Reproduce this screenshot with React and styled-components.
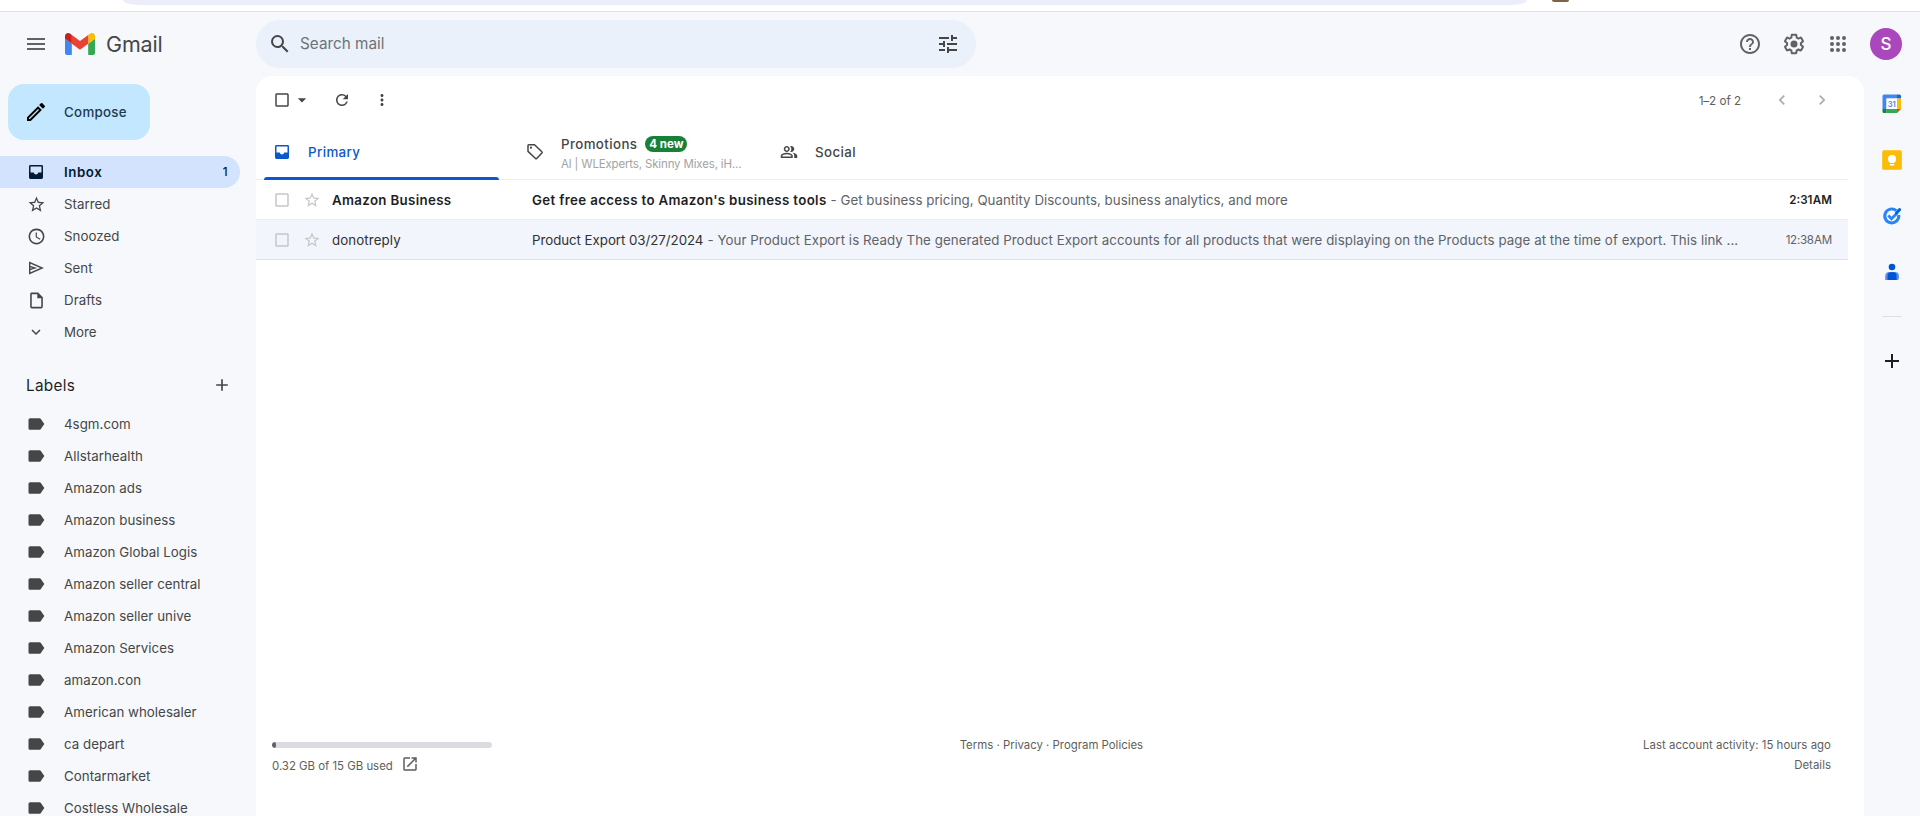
import React from 'react'
import styled, { createGlobalStyle } from 'styled-components'
import {
  MdAccessTime,
  MdAdd,
  MdArrowDropDown,
  MdCheckBoxOutlineBlank,
  MdChevronLeft,
  MdChevronRight,
  MdExpandMore,
  MdHelpOutline,
  MdLabel,
  MdMenu,
  MdMoreVert,
  MdOpenInNew,
  MdOutlineInsertDriveFile,
  MdOutlineModeEdit,
  MdOutlinePeopleAlt,
  MdRefresh,
  MdSearch,
  MdStarOutline,
  MdTune,
} from 'react-icons/md'

const GlobalStyle = createGlobalStyle`
  * {
    box-sizing: border-box;
  }
  body {
    margin: 0;
    overflow: hidden;
    background: #f6f8fc;
    font-family: Inter, Roboto, sans-serif;
    font-size: 13.3px;
    color: #444746;
  }
  svg {
    display: block;
    flex: none;
  }
`
const Page = styled.div`
  display: flex;
  flex-direction: column;
  height: 816px;
  overflow: hidden;
`
const BrowserEdge = styled.div`
  display: flex;
  align-items: flex-start;
  flex: none;
  height: 12px;
  padding-left: 123px;
  background: #fff;
  border-bottom: 1px solid #dfe3e1;
`
const AddressBar = styled.div`
  width: 1404px;
  height: 5px;
  border-radius: 0 0 16px 16px / 0 0 5px 5px;
  background: #ebeef8;
`
const Extension = styled.div`
  width: 17px;
  height: 2px;
  margin-left: 25px;
  border-radius: 0 0 2px 2px;
  background: #82623f;
`
const Header = styled.header`
  display: flex;
  align-items: center;
  flex: none;
  height: 64px;
  padding: 0 18px 0 24px;
`
const Brand = styled.div`
  display: flex;
  align-items: center;
  width: 232px;
  color: #5f6368;
`
const LogoSlot = styled.div`
  margin-left: 17px;
`
const BrandName = styled.span`
  margin-left: 11px;
  font-size: 21.5px;
  letter-spacing: -0.15px;
  color: #444746;
`
const SearchBox = styled.div`
  display: flex;
  align-items: center;
  width: 720px;
  height: 48px;
  padding: 0 16px 1px 12px;
  border-radius: 24px;
  background: #eaf1fb;
  color: #444746;
`
const SearchHint = styled.span`
  flex: 1;
  margin-left: 8px;
  font-size: 15.3px;
  color: #6e7377;
`
const HeaderActions = styled.div`
  display: flex;
  align-items: center;
  gap: 20px;
  margin-left: auto;
  color: #5f6368;
`
const Avatar = styled.div`
  width: 32px;
  height: 32px;
  border-radius: 50%;
  background: #ab47bc;
  color: #fff;
  font-size: 17px;
  font-weight: 500;
  line-height: 32px;
  text-align: center;
`
const Body = styled.div`
  display: flex;
  flex: 1;
  min-height: 0;
`
const Sidebar = styled.aside`
  flex: none;
  width: 256px;
  padding-top: 8px;
  overflow: hidden;
`
const Compose = styled.div`
  display: flex;
  align-items: center;
  gap: 16px;
  width: 142px;
  height: 56px;
  margin: 0 0 16px 8px;
  padding-left: 16px;
  border-radius: 16px;
  background: #c2e7ff;
  color: #1c3a52;
  font-weight: 450;
  letter-spacing: 0.3px;
`
const NavItem = styled.div`
  display: flex;
  align-items: center;
  width: 240px;
  height: 32px;
  padding: 0 12px 0 26px;
  border-radius: 0 16px 16px 0;
  background: ${p => (p.$active ? '#d3e3fd' : 'none')};
  color: ${p => (p.$active ? '#001d35' : '#444746')};
  font-weight: ${p => (p.$active ? 600 : 400)};
  letter-spacing: ${p => (p.$active ? 0.55 : 0.03)}px;
`
const NavIcon = styled.span`
  display: flex;
  justify-content: center;
  width: 20px;
  margin-right: 18px;
`
const NavCount = styled.span`
  margin-left: auto;
  font-size: 11.5px;
  font-weight: 500;
`
const LabelsHead = styled.div`
  display: flex;
  align-items: center;
  justify-content: space-between;
  width: 240px;
  height: 32px;
  margin: 21px 0 7px;
  padding: 0 8px 0 26px;
  font-size: 15.3px;
  letter-spacing: 0.3px;
  color: #1f1f1f;
  svg {
    color: #444746;
  }
`
const Panel = styled.main`
  display: flex;
  flex-direction: column;
  flex: none;
  width: 1608px;
  border-radius: 16px 16px 0 0;
  background: #fff;
`
const Toolbar = styled.div`
  display: flex;
  align-items: center;
  height: 48px;
  padding: 0 12px 0 16px;
`
const ToolIcon = styled.span`
  display: flex;
  align-items: center;
  justify-content: center;
  width: ${p => p.$width || 20}px;
  height: 20px;
  color: ${p => p.$color || '#444746'};
`
const PageCount = styled.span`
  margin: 1px 31px 0 auto;
  font-size: 11.7px;
  letter-spacing: -0.05px;
  color: #5e5e5e;
`
const Tabs = styled.div`
  display: flex;
  flex: none;
  width: 1592px;
  height: 56px;
  border-bottom: 1px solid #eceff1;
`
const Tab = styled.div`
  position: relative;
  display: flex;
  align-items: center;
  width: 253px;
  padding-left: 16px;
  color: ${p => (p.$active ? '#0b57d0' : '#444746')};
  font-weight: 450;
`
const TabLine = styled.div`
  position: absolute;
  left: 8px;
  bottom: -1px;
  width: 235px;
  height: 3px;
  border-radius: 3px 3px 0 0;
  background: #0b57d0;
`
const TabText = styled.div`
  display: flex;
  flex-direction: column;
  gap: 5px;
  margin-left: 16px;
  letter-spacing: 0.4px;
`
const TabTitle = styled.div`
  display: flex;
  align-items: center;
  gap: 8px;
  margin-top: 4px;
  line-height: 16px;
`
const Badge = styled.span`
  width: 42px;
  height: 16px;
  border-radius: 8px;
  background: #188038;
  color: #fff;
  font-size: 11.5px;
  font-weight: 700;
  letter-spacing: 0;
  line-height: 16px;
  text-align: center;
`
const TabHint = styled.div`
  font-size: 11.5px;
  font-weight: 400;
  line-height: 14px;
  letter-spacing: -0.16px;
  white-space: nowrap;
  color: #a3a3a3;
`
const MailRow = styled.div`
  display: flex;
  align-items: center;
  flex: none;
  width: 1592px;
  height: 40px;
  padding: 0 16px;
  border-bottom: 1px solid ${p => (p.$read ? '#dde1ea' : '#e9ecf0')};
  background: ${p => (p.$read ? '#f2f5fc' : '#fff')};
  color: ${p => (p.$read ? '#303134' : '#1f1f1f')};
  font-weight: ${p => (p.$read ? 400 : 600)};
  white-space: nowrap;
`
const Sender = styled.span`
  width: 200px;
  letter-spacing: ${p => (p.$read ? 0.1 : 0.33)}px;
`
const Subject = styled.span`
  letter-spacing: ${p => (p.$read ? -0.04 : 0.34)}px;
`
const Snippet = styled.span`
  margin-left: 4px;
  color: #5f6368;
  font-weight: 400;
  letter-spacing: ${p => (p.$read ? 0.063 : 0.025)}px;
`
const Time = styled.span`
  margin-left: auto;
  font-size: 11.6px;
  letter-spacing: ${p => (p.$read ? -0.3 : 0)}px;
  word-spacing: -2.5px;
  color: ${p => (p.$read ? '#5f6368' : '#1f1f1f')};
`
const Footer = styled.footer`
  display: grid;
  grid-template-columns: 1fr 1fr 1fr;
  margin-top: auto;
  padding: 0 33px 39px 16px;
  font-size: 11.4px;
  line-height: 20px;
  color: #5e5e5e;
`
const StorageBar = styled.div`
  width: 220px;
  height: 6px;
  margin: 7px 0 7px;
  border-radius: 3px;
  background: #dadce0;
  overflow: hidden;
`
const StorageUsed = styled.div`
  width: 4px;
  height: 6px;
  border-radius: 2px;
  background: #5f6368;
`
const StorageText = styled.div`
  display: flex;
  gap: 8px;
  line-height: 22px;
`
const Terms = styled.div`
  padding-left: 168px;
`
const Activity = styled.div`
  letter-spacing: 0.04px;
  text-align: right;
`
const SidePanel = styled.aside`
  display: flex;
  flex-direction: column;
  align-items: center;
  width: 56px;
  padding-top: 18px;
  color: #1f1f1f;
`
const AppSlot = styled.div`
  display: flex;
  align-items: center;
  justify-content: center;
  height: 20px;
  margin-bottom: 36px;
`
const Rule = styled.div`
  width: 20px;
  height: 1px;
  margin: -2px 0 32px;
  background: #dcdfe3;
`

const GmailLogo = () => (
  <svg width="30" height="22" viewBox="52 42 88 66" preserveAspectRatio="none">
    <path fill="#4285f4" d="M58 108h14V74L52 59v43c0 3.32 2.69 6 6 6" />
    <path fill="#34a853" d="M120 108h14c3.32 0 6-2.69 6-6V59l-20 15" />
    <path fill="#fbbc04" d="M120 48v26l20-15v-8c0-7.42-8.47-11.65-14.4-7.2" />
    <path fill="#ea4335" d="M72 74V48l24 18 24-18v26L96 92" />
    <path fill="#c5221f" d="M52 51v8l20 15V48l-5.6-4.2c-5.94-4.45-14.4-.22-14.4 7.2" />
  </svg>
)
const GearIcon = () => (
  <svg width="24" height="24" viewBox="0 0 24 24" fill="currentColor">
    <path d="M13.85 22.25h-3.7c-.74 0-1.36-.54-1.45-1.27l-.27-1.89c-.27-.14-.53-.29-.79-.46l-1.8.72c-.7.26-1.47-.03-1.81-.65L2.2 15.53c-.35-.66-.2-1.44.36-1.88l1.53-1.19c-.01-.15-.02-.3-.02-.46 0-.15.01-.31.02-.46l-1.52-1.19c-.59-.45-.74-1.26-.37-1.88l1.85-3.19c.34-.62 1.11-.9 1.79-.63l1.81.73c.26-.17.52-.32.78-.46l.27-1.91c.09-.7.71-1.25 1.44-1.25h3.7c.74 0 1.36.54 1.45 1.27l.27 1.89c.27.14.53.29.79.46l1.8-.72c.71-.26 1.48.03 1.82.65l1.84 3.18c.36.66.2 1.44-.36 1.88l-1.52 1.19c.01.15.02.3.02.46s-.01.31-.02.46l1.52 1.19c.56.45.72 1.23.37 1.86l-1.86 3.22c-.34.62-1.11.9-1.8.63l-1.8-.72c-.26.17-.52.32-.78.46l-.27 1.91c-.1.68-.72 1.22-1.46 1.22zm-3.23-2h2.76l.37-2.55.53-.22c.44-.18.88-.44 1.34-.78l.45-.34 2.38.96 1.38-2.4-2.03-1.58.07-.56c.03-.26.06-.51.06-.78s-.03-.53-.06-.78l-.07-.56 2.03-1.58-1.39-2.4-2.39.96-.45-.35c-.42-.32-.87-.58-1.33-.77l-.52-.22-.37-2.55h-2.76l-.37 2.55-.53.21c-.44.19-.88.44-1.34.79l-.45.33-2.38-.95-1.39 2.39 2.03 1.58-.07.56a7 7 0 0 0-.06.79c0 .26.02.53.06.78l.07.56-2.03 1.58 1.38 2.4 2.39-.96.45.35c.43.33.86.58 1.33.77l.53.22.38 2.55z" />
    <circle cx="12" cy="12" r="3.5" />
  </svg>
)
const AppsIcon = () => (
  <svg width="24" height="24" viewBox="0 0 24 24" fill="currentColor">
    {[6, 12, 18].map(y => [6, 12, 18].map(x => <circle key={x + '-' + y} cx={x} cy={y} r="2" />))}
  </svg>
)
// solid tray with the upper part cut out
const InboxIcon = () => (
  <svg width="20" height="20" viewBox="0 0 20 20" fill="currentColor">
    <path
      fillRule="evenodd"
      d="M4.4 3h11.2Q17 3 17 4.4v11.2q0 1.4-1.4 1.4H4.4Q3 17 3 15.6V4.4Q3 3 4.4 3zM4.5 4.5v6h3.2q.6 2 2.3 2t2.3-2h3.2v-6z"
    />
  </svg>
)
const SendIcon = () => (
  <svg width="20" height="20" viewBox="0 0 20 20" fill="none" stroke="currentColor" strokeWidth="1.4">
    <path d="M3.7 4.6v10.8L16.2 10zM3.7 8.3l5.2 1.7-5.2 1.7" />
  </svg>
)
const TagIcon = () => (
  <svg width="20" height="20" viewBox="0 0 20 20" fill="none" stroke="currentColor" strokeWidth="1.5">
    <path d="M3 3.5q0-.8.8-.8h5.7l7.4 7.1q.6.6 0 1.2l-5.2 5.5q-.6.6-1.2 0L3 9.4z" />
    <circle cx="6" cy="5.7" r="1.1" fill="currentColor" stroke="none" />
  </svg>
)
const CalendarIcon = () => (
  <svg width="20" height="20" viewBox="0 0 20 20">
    <path fill="#4285f4" d="M2 .5h13v4H4.5V15H.5V2Q.5.5 2 .5z" />
    <path fill="#1967d2" d="M15 .5h2.5q1.5 0 1.5 1.5v2.5h-4z" />
    <path fill="#fbbc04" d="M15 4.5h4V15h-4z" />
    <path fill="#34a853" d="M4.5 15H15v4H4.5z" />
    <path fill="#188038" d="M.5 15h4v4H2Q.5 19 .5 17.5z" />
    <path fill="#ea4335" d="M15 15h4l-4 4z" />
    <path fill="#fff" d="M4.5 4.5H15V15H4.5z" />
    <text x="9.8" y="12.6" textAnchor="middle" fontSize="7.6" fontWeight="600" fill="#4285f4">31</text>
  </svg>
)
const KeepIcon = () => (
  <svg width="20" height="20" viewBox="0 0 20 20">
    <rect x=".2" y=".2" width="19.6" height="19.6" rx="1.6" fill="#fbbc04" />
    <circle cx="10" cy="9" r="4.1" fill="#fff" />
    <path fill="#fff" d="M7.8 10h4.4v3H7.8zM7.8 14h4.4v1.4H7.8z" />
  </svg>
)
const TasksIcon = () => (
  <svg width="20" height="20" viewBox="0 0 20 20" fill="none">
    <path d="M14.3 4.6A7 7 0 1 0 16.7 9" stroke="#2684fc" strokeWidth="3" />
    <path d="M6.3 9.6l3.2 3.2 6-6" stroke="#2684fc" strokeWidth="2.8" />
    <path d="M14.4 7l3.2-3.4" stroke="#0066da" strokeWidth="3" strokeLinecap="round" />
  </svg>
)
const ContactsIcon = () => (
  <svg width="20" height="20" viewBox="0 0 20 20">
    <path fill="#578cf7" d="M3.2 18v-3.6q0-4.4 4.4-4.4h5q4.4 0 4.4 4.4t-2.6 3.6z" />
    <path fill="#0056d2" d="M5.6 18v-3.6q0-4.2 3-4.2h3q3 0 3 4.2V18z" />
    <circle cx="10" cy="5" r="3.3" fill="#0056d2" />
  </svg>
)

const folders = [
  { name: 'Inbox', icon: <InboxIcon />, count: 1, active: true },
  { name: 'Starred', icon: <MdStarOutline size={19} /> },
  { name: 'Snoozed', icon: <MdAccessTime size={19} /> },
  { name: 'Sent', icon: <SendIcon /> },
  { name: 'Drafts', icon: <MdOutlineInsertDriveFile size={19} /> },
  { name: 'More', icon: <MdExpandMore size={18} /> },
]
const labels = [
  '4sgm.com',
  'Allstarhealth',
  'Amazon ads',
  'Amazon business',
  'Amazon Global Logis',
  'Amazon seller central',
  'Amazon seller unive',
  'Amazon Services',
  'amazon.con',
  'American wholesaler',
  'ca depart',
  'Contarmarket',
  'Costless Wholesale',
]
const mails = [
  {
    sender: 'Amazon Business',
    subject: "Get free access to Amazon's business tools",
    snippet: 'Get business pricing, Quantity Discounts, business analytics, and more',
    time: '2:31 AM',
  },
  {
    sender: 'donotreply',
    subject: 'Product Export 03/27/2024',
    snippet:
      'Your Product Export is Ready The generated Product Export accounts for all products that were displaying on the Products page at the time of export. This link ...',
    time: '12:38 AM',
    read: true,
  },
]

const App = () => (
  <Page>
    <GlobalStyle />
    <BrowserEdge>
      <AddressBar />
      <Extension />
    </BrowserEdge>
    <Header>
      <Brand>
        <MdMenu size={24} />
        <LogoSlot>
          <GmailLogo />
        </LogoSlot>
        <BrandName>Gmail</BrandName>
      </Brand>
      <SearchBox>
        <MdSearch size={24} />
        <SearchHint>Search mail</SearchHint>
        <MdTune size={24} />
      </SearchBox>
      <HeaderActions>
        <MdHelpOutline size={24} />
        <GearIcon />
        <AppsIcon />
        <Avatar>S</Avatar>
      </HeaderActions>
    </Header>
    <Body>
      <Sidebar>
        <Compose>
          <MdOutlineModeEdit size={24} color="#000" />
          Compose
        </Compose>
        {folders.map(f => (
          <NavItem key={f.name} $active={f.active}>
            <NavIcon>{f.icon}</NavIcon>
            {f.name}
            {f.count && <NavCount>{f.count}</NavCount>}
          </NavItem>
        ))}
        <LabelsHead>
          Labels
          <MdAdd size={20} />
        </LabelsHead>
        {labels.map(name => (
          <NavItem key={name}>
            <NavIcon>
              <MdLabel size={20} />
            </NavIcon>
            {name}
          </NavItem>
        ))}
      </Sidebar>
      <Panel>
        <Toolbar>
          <ToolIcon>
            <MdCheckBoxOutlineBlank size={18} />
          </ToolIcon>
          <ToolIcon>
            <MdArrowDropDown size={20} />
          </ToolIcon>
          <ToolIcon $width={60}>
            <MdRefresh size={18} />
          </ToolIcon>
          <ToolIcon>
            <MdMoreVert size={18} />
          </ToolIcon>
          <PageCount>1–2 of 2</PageCount>
          <ToolIcon $color="#a8aaac">
            <MdChevronLeft size={20} />
          </ToolIcon>
          <ToolIcon $width={60} $color="#a8aaac">
            <MdChevronRight size={20} />
          </ToolIcon>
        </Toolbar>
        <Tabs>
          <Tab $active>
            <InboxIcon />
            <TabText>Primary</TabText>
            <TabLine />
          </Tab>
          <Tab>
            <TagIcon />
            <TabText>
              <TabTitle>
                Promotions <Badge>4 new</Badge>
              </TabTitle>
              <TabHint>Al | WLExperts, Skinny Mixes, iH...</TabHint>
            </TabText>
          </Tab>
          <Tab>
            <ToolIcon $width={21}>
              <MdOutlinePeopleAlt size={18} />
            </ToolIcon>
            <TabText>Social</TabText>
          </Tab>
        </Tabs>
        {mails.map(m => (
          <MailRow key={m.sender} $read={m.read}>
            <ToolIcon $color="#c4c7c5">
              <MdCheckBoxOutlineBlank size={18} />
            </ToolIcon>
            <ToolIcon $width={40} $color="#c4c7c5">
              <MdStarOutline size={18} />
            </ToolIcon>
            <Sender $read={m.read}>{m.sender}</Sender>
            <Subject $read={m.read}>{m.subject}</Subject>
            <Snippet $read={m.read}>- {m.snippet}</Snippet>
            <Time $read={m.read}>{m.time}</Time>
          </MailRow>
        ))}
        <Footer>
          <div>
            <StorageBar>
              <StorageUsed />
            </StorageBar>
            <StorageText>
              0.32 GB of 15 GB used
              <MdOpenInNew size={18} />
            </StorageText>
          </div>
          <Terms>Terms · Privacy · Program Policies</Terms>
          <Activity>
            Last account activity: 15 hours ago
            <br />
            Details
          </Activity>
        </Footer>
      </Panel>
      <SidePanel>
        <AppSlot>
          <CalendarIcon />
        </AppSlot>
        <AppSlot>
          <KeepIcon />
        </AppSlot>
        <AppSlot>
          <TasksIcon />
        </AppSlot>
        <AppSlot>
          <ContactsIcon />
        </AppSlot>
        <Rule />
        <MdAdd size={24} />
      </SidePanel>
    </Body>
  </Page>
)

export default App
